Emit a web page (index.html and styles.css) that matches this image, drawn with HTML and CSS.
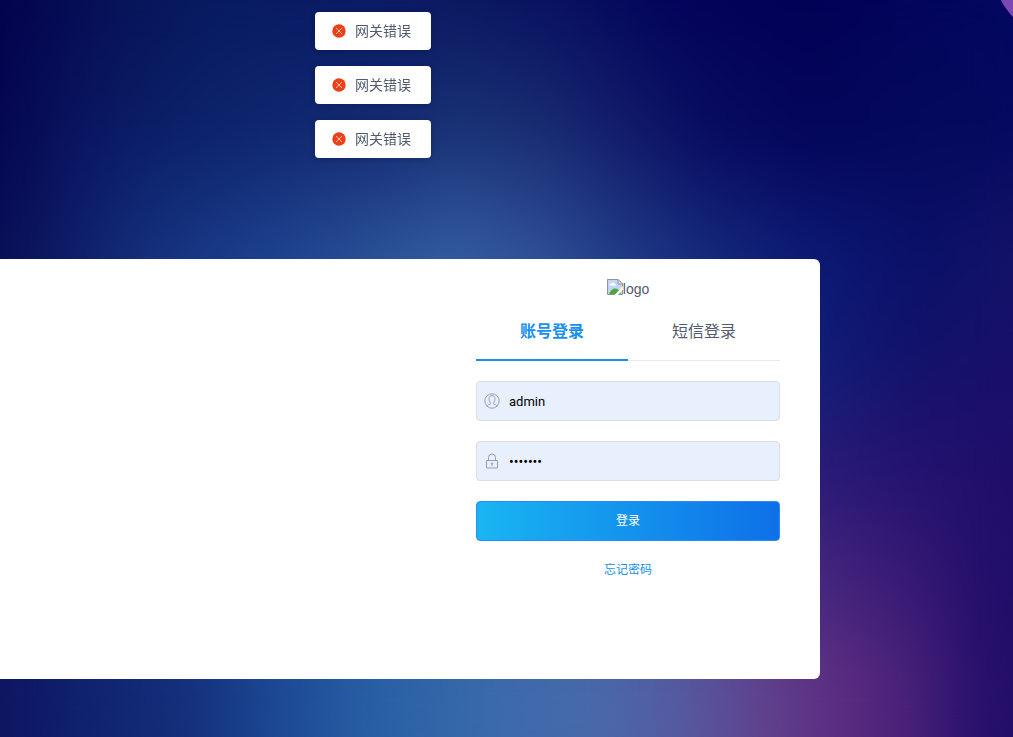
FILE: index.html
```html
<!DOCTYPE html>
<html lang="zh-CN">
<head>
<meta charset="utf-8">
<meta name="viewport" content="width=device-width, initial-scale=1">
<title>账号登录</title>
<link rel="stylesheet" href="styles.css">
</head>
<body>
<div class="backdrop" aria-hidden="true">
  <div class="band band-6"></div>
  <div class="band band-5"></div>
  <div class="band band-4"></div>
  <div class="band band-3"></div>
  <div class="band band-2"></div>
  <div class="band band-1"></div>
  <div class="haze"></div>
  <div class="orb"></div>
</div>

<div class="messages" role="alert">
  <div class="message">
    <svg class="message-icon" viewBox="0 0 14 14"><circle cx="7" cy="7" r="6.7" fill="#ed4014"/><path d="M4 4l6 6M10 4l-6 6" stroke="#fff" stroke-width=".7"/></svg>
    <span>网关错误</span>
  </div>
  <div class="message">
    <svg class="message-icon" viewBox="0 0 14 14"><circle cx="7" cy="7" r="6.7" fill="#ed4014"/><path d="M4 4l6 6M10 4l-6 6" stroke="#fff" stroke-width=".7"/></svg>
    <span>网关错误</span>
  </div>
  <div class="message">
    <svg class="message-icon" viewBox="0 0 14 14"><circle cx="7" cy="7" r="6.7" fill="#ed4014"/><path d="M4 4l6 6M10 4l-6 6" stroke="#fff" stroke-width=".7"/></svg>
    <span>网关错误</span>
  </div>
</div>

<main class="page">
  <section class="card">
    <form class="login">
      <div class="logo">
        <svg class="logo-icon" viewBox="0 0 16 16">
          <path d="M.5.5h10.500l4.500 4.500v10.500H.5z" fill="#c3d6f7" stroke="#8f949b"/>
          <path d="M2.500 6.500c-.3-1.500 1-2 1.700-1.700C4.700 3.200 7 3.200 7.500 4.800c1.200-.1 1.500.9 1.300 1.700z" fill="#fff"/>
          <path d="M2 15c1-3 3.500-5.500 6-5.500 2.500 0 5 2 6 5.500z" fill="#4aa83a"/>
          <path d="M11 .5v4.500h4.500z" fill="#f4f4f4" stroke="#8f949b"/>
          <path d="M16 7L7.500 16h3.500l5-5.500z" fill="#fff"/>
        </svg>
        <span>logo</span>
      </div>
      <div class="tabs" role="tablist">
        <button class="tab tab-active" type="button" role="tab" aria-selected="true">账号登录</button>
        <button class="tab" type="button" role="tab" aria-selected="false">短信登录</button>
      </div>
      <label class="field">
        <svg class="field-icon" viewBox="0 0 16 16" fill="none" stroke="#999fb0"><circle cx="8" cy="8" r="7.2"/><path d="M3.100 13c.5-1.200 1.500-1.400 2.700-1.600 1-.3.900-1.500.4-2.200C5.500 8.300 5 7.300 5 5.800 5 3.700 6.200 2.600 8 2.600s3 1.100 3 3.200c0 1.500-.5 2.500-1.200 3.400-.5.700-.6 1.900.4 2.200 1.200.2 2.200.4 2.700 1.600"/></svg>
        <input class="input" type="text" value="admin" aria-label="账号" autocomplete="off">
      </label>
      <label class="field">
        <svg class="field-icon" viewBox="0 0 16 16" fill="none" stroke="#999fa9"><path d="M2.500 7.500h11v7.500h-11zM4.500 7.500v-3a3.500 3.500 0 0 1 7 0v3"/><circle cx="8" cy="10.500" r=".7"/><path d="M8 11v2"/></svg>
        <input class="input input-secret" type="password" value="1234567" aria-label="密码" autocomplete="off">
      </label>
      <button class="submit" type="button">登录</button>
      <a class="forgot" href="#">忘记密码</a>
    </form>
  </section>
</main>
</body>
</html>
```
FILE: styles.css
```css
* { box-sizing: border-box; }

body {
  margin: 0;
  background: #0a1058;
  color: #515a6e;
  font-family: Roboto, "Noto Sans CJK SC", sans-serif;
  font-size: 14px;
}

/* Night-sky glow: colour rows that fade vertically into one another */
.backdrop {
  position: fixed;
  inset: 0;
  overflow: hidden;
}

.band {
  position: absolute;
  inset: 0;
}

.band-1 {
  background: linear-gradient(90deg, #03034c, #071458 12%, #081b62 22%, #0a1b64 36%, #0b1860 46%, #08105e 56%, #03045a 66%, #020256 80%, #030860);
  mask-image: linear-gradient(#000, transparent 18%);
}

.band-2 {
  background: linear-gradient(90deg, #050750, #0a1460 7%, #0b2068 16%, #10286f 28%, #152c74 38%, #1b3478 46%, #192c72 54%, #121b6a 62%, #080c60 70%, #04065a 80%, #050a5c 92%, #070b60);
  mask-image: linear-gradient(#000 18%, transparent 35%);
}

.band-3 {
  background: linear-gradient(90deg, #091056, #0e1c66 6%, #15307c 14%, #1d418f 26%, #2c5398 38%, #355ca0 45%, #2f4f96 54%, #203a86 62%, #14277a 71%, #0c1a74 80%, #0a1068 91%, #141468);
  mask-image: linear-gradient(#000 35%, transparent 49%);
}

.band-4 {
  background: linear-gradient(90deg, #091056, #1d418f 26%, #355ca0 45%, #203a86 65%, #111d77 81%, #13126b 90%, #19106a);
  mask-image: linear-gradient(#000 49%, transparent 65%);
}

.band-5 {
  background: linear-gradient(90deg, #091056, #1d418f 26%, #355ca0 45%, #3a3a8a 65%, #2b1b77 81%, #251370 90%, #1f0e69);
  mask-image: linear-gradient(#000 65%, transparent 92%);
}

.band-6 {
  background: linear-gradient(90deg, #0e1560, #102370 9%, #15317c 19%, #1c4894 27%, #2860a5 37%, #3b6bab 49%, #4969ab 59%, #555aa0 67%, #60408c 76%, #5b2c81 83%, #482078 90%, #2a126e 96%, #220e68);
}

.haze {
  position: absolute;
  inset: 0;
  backdrop-filter: blur(20px);
}

.orb {
  position: absolute;
  top: -122px;
  right: -144px;
  width: 166px;
  height: 166px;
  border-radius: 50%;
  background: #7b47b4;
}

.messages {
  position: absolute;
  z-index: 2;
  top: 12px;
  left: 315px;
  display: grid;
  gap: 16px;
}

.message {
  display: flex;
  align-items: center;
  gap: 9px;
  padding: 8px 20px 8px 17px;
  border-radius: 4px;
  background: #fff;
  box-shadow: 0 1px 6px rgba(0, 0, 0, .2);
  line-height: 22px;
}

.message-icon {
  width: 14px;
  height: 14px;
}

.page {
  position: relative;
  display: flex;
  flex-direction: column;
  justify-content: flex-end;
  min-height: 100vh;
  padding: 176px 193px 58px 0;
}

.card {
  display: flex;
  justify-content: flex-end;
  min-height: 420px;
  padding: 20px 40px;
  border-radius: 0 6px 6px 0;
  background: #fff;
}

.login {
  display: flex;
  flex-direction: column;
  gap: 20px;
  width: 304px;
}

.logo {
  display: flex;
  justify-content: center;
  height: 16px;
  font-family: "Liberation Sans", Arial, sans-serif;
  line-height: 20px;
}

.logo-icon {
  width: 16px;
  height: 16px;
}

.tabs {
  display: flex;
  height: 46px;
  box-shadow: inset 0 -1px #e8eaec;
}

.tab {
  flex: 1;
  padding: 0 0 12px;
  border: 0;
  background: none;
  color: #515a6e;
  font: 16px/24px Roboto, "Noto Sans CJK SC", sans-serif;
}

.tab-active {
  box-shadow: inset 0 -2px #1890ed;
  color: #1890ed;
  font-weight: 700;
}

.field {
  display: flex;
  align-items: center;
  height: 40px;
  padding: 0 7px;
  gap: 9px;
  border: 1px solid #dcdee2;
  border-radius: 4px;
  background: #e8f0fe;
}

.field-icon {
  flex: none;
  width: 16px;
  height: 16px;
}

.input {
  flex: 1;
  min-width: 0;
  padding: 2px 0 0;
  border: 0;
  outline: 0;
  background: none;
  color: #000;
  font: 13px/20px Roboto, sans-serif;
}

.input-secret {
  font-size: 14px;
}

.submit {
  height: 40px;
  border: 1px solid #2d8cf0;
  border-radius: 4px;
  background: linear-gradient(90deg, #19b5f1, #0e70e8);
  color: #fff;
  font: 12px/18px Roboto, "Noto Sans CJK SC", sans-serif;
}

.forgot {
  align-self: center;
  color: #1890ed;
  font-size: 12px;
  line-height: 18px;
  text-decoration: none;
}
```
